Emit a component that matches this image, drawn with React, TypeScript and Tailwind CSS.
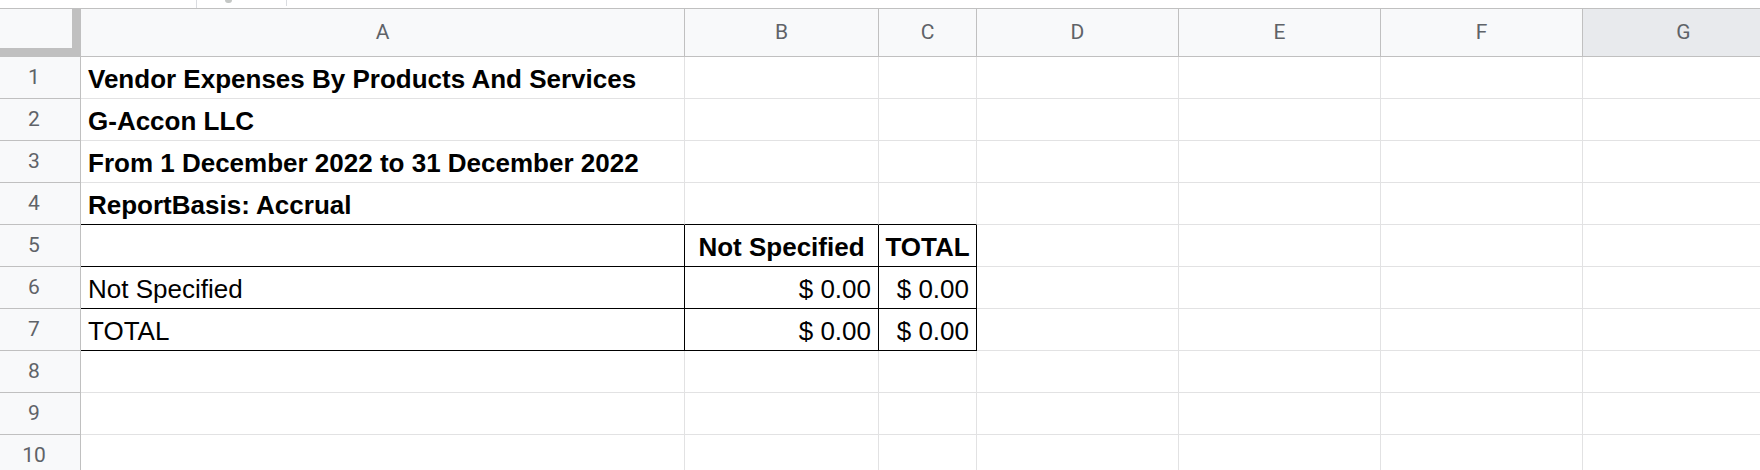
const columns = [
  { name: 'A', width: 'w-[604px]', head: 'bg-[#f8f9fa]' },
  { name: 'B', width: 'w-[194px]', head: 'bg-[#f8f9fa]' },
  { name: 'C', width: 'w-[98px]', head: 'bg-[#f8f9fa]' },
  { name: 'D', width: 'w-[202px]', head: 'bg-[#f8f9fa]' },
  { name: 'E', width: 'w-[202px]', head: 'bg-[#f8f9fa]' },
  { name: 'F', width: 'w-[202px]', head: 'bg-[#f8f9fa]' },
  { name: 'G', width: 'w-[202px]', head: 'bg-[#e8eaed]' },
]

type Cell = {
  text?: string
  bold?: boolean
  align?: 'left' | 'center' | 'right'
  edgeRight?: boolean
  edgeBottom?: boolean
}

const rows: Cell[][] = [
  [{ text: 'Vendor Expenses By Products And Services', bold: true }],
  [{ text: 'G-Accon LLC', bold: true }],
  [{ text: 'From 1 December 2022 to 31 December 2022', bold: true }],
  [
    { text: 'ReportBasis: Accrual', bold: true, edgeBottom: true },
    { edgeBottom: true },
    { edgeBottom: true },
  ],
  [
    { edgeRight: true, edgeBottom: true },
    { text: 'Not Specified', bold: true, align: 'center', edgeRight: true, edgeBottom: true },
    { text: 'TOTAL', bold: true, align: 'center', edgeRight: true, edgeBottom: true },
  ],
  [
    { text: 'Not Specified', edgeRight: true, edgeBottom: true },
    { text: '$ 0.00', align: 'right', edgeRight: true, edgeBottom: true },
    { text: '$ 0.00', align: 'right', edgeRight: true, edgeBottom: true },
  ],
  [
    { text: 'TOTAL', edgeRight: true, edgeBottom: true },
    { text: '$ 0.00', align: 'right', edgeRight: true, edgeBottom: true },
    { text: '$ 0.00', align: 'right', edgeRight: true, edgeBottom: true },
  ],
  [],
  [],
  [],
]

const alignClass = {
  left: 'justify-start pl-[7px]',
  center: 'justify-center',
  right: 'justify-end pr-[7px]',
}

const GridCell = ({ cell, width }: { cell: Cell; width: string }) => (
  <div
    className={`flex h-[42px] shrink-0 items-end overflow-visible whitespace-nowrap border-r border-b pb-[6px] text-[26px] leading-none text-black ${width} ${alignClass[cell.align ?? 'left']} ${cell.edgeRight ? 'border-r-black' : 'border-r-[#e2e2e3]'} ${cell.edgeBottom ? 'border-b-black' : 'border-b-[#e2e2e3]'} ${cell.bold ? 'font-bold' : 'font-normal'}`}
  >
    {cell.text}
  </div>
)

export default function App() {
  return (
    <div className="h-[470px] w-[1760px] overflow-hidden bg-white font-['Liberation_Sans',Arial,sans-serif]">
      <div className="flex h-[8px] items-start">
        <div className="ml-[196px] h-[8px] w-px bg-[#dadce0]" />
        <div className="ml-[28px] h-[3px] w-[7px] rounded-b-full bg-[#c4c7c5]" />
        <div className="ml-[54px] h-[6px] w-px bg-[#dadce0]" />
      </div>

      <div className="flex border-t border-[#c0c0c0] font-['Roboto',sans-serif] text-[21px] text-[#5f6368]">
        <div className="h-[48px] w-[81px] shrink-0 bg-[#c0c0c0]">
          <div className="h-[39px] w-[72px] bg-[#f8f9fa]" />
        </div>
        {columns.map((col) => (
          <div
            key={col.name}
            className={`flex h-[48px] shrink-0 items-center justify-center border-r border-b border-[#c0c0c0] ${col.width} ${col.head}`}
          >
            {col.name}
          </div>
        ))}
      </div>

      {rows.map((row, r) => (
        <div key={r} className="flex">
          <div className="flex h-[42px] w-[81px] shrink-0 items-center justify-center border-r border-b border-[#c0c0c0] bg-[#f8f9fa] pr-[12px] font-['Roboto',sans-serif] text-[21px] text-[#5f6368]">
            {r + 1}
          </div>
          {columns.map((col, c) => (
            <GridCell key={col.name} cell={row[c] ?? {}} width={col.width} />
          ))}
        </div>
      ))}
    </div>
  )
}
